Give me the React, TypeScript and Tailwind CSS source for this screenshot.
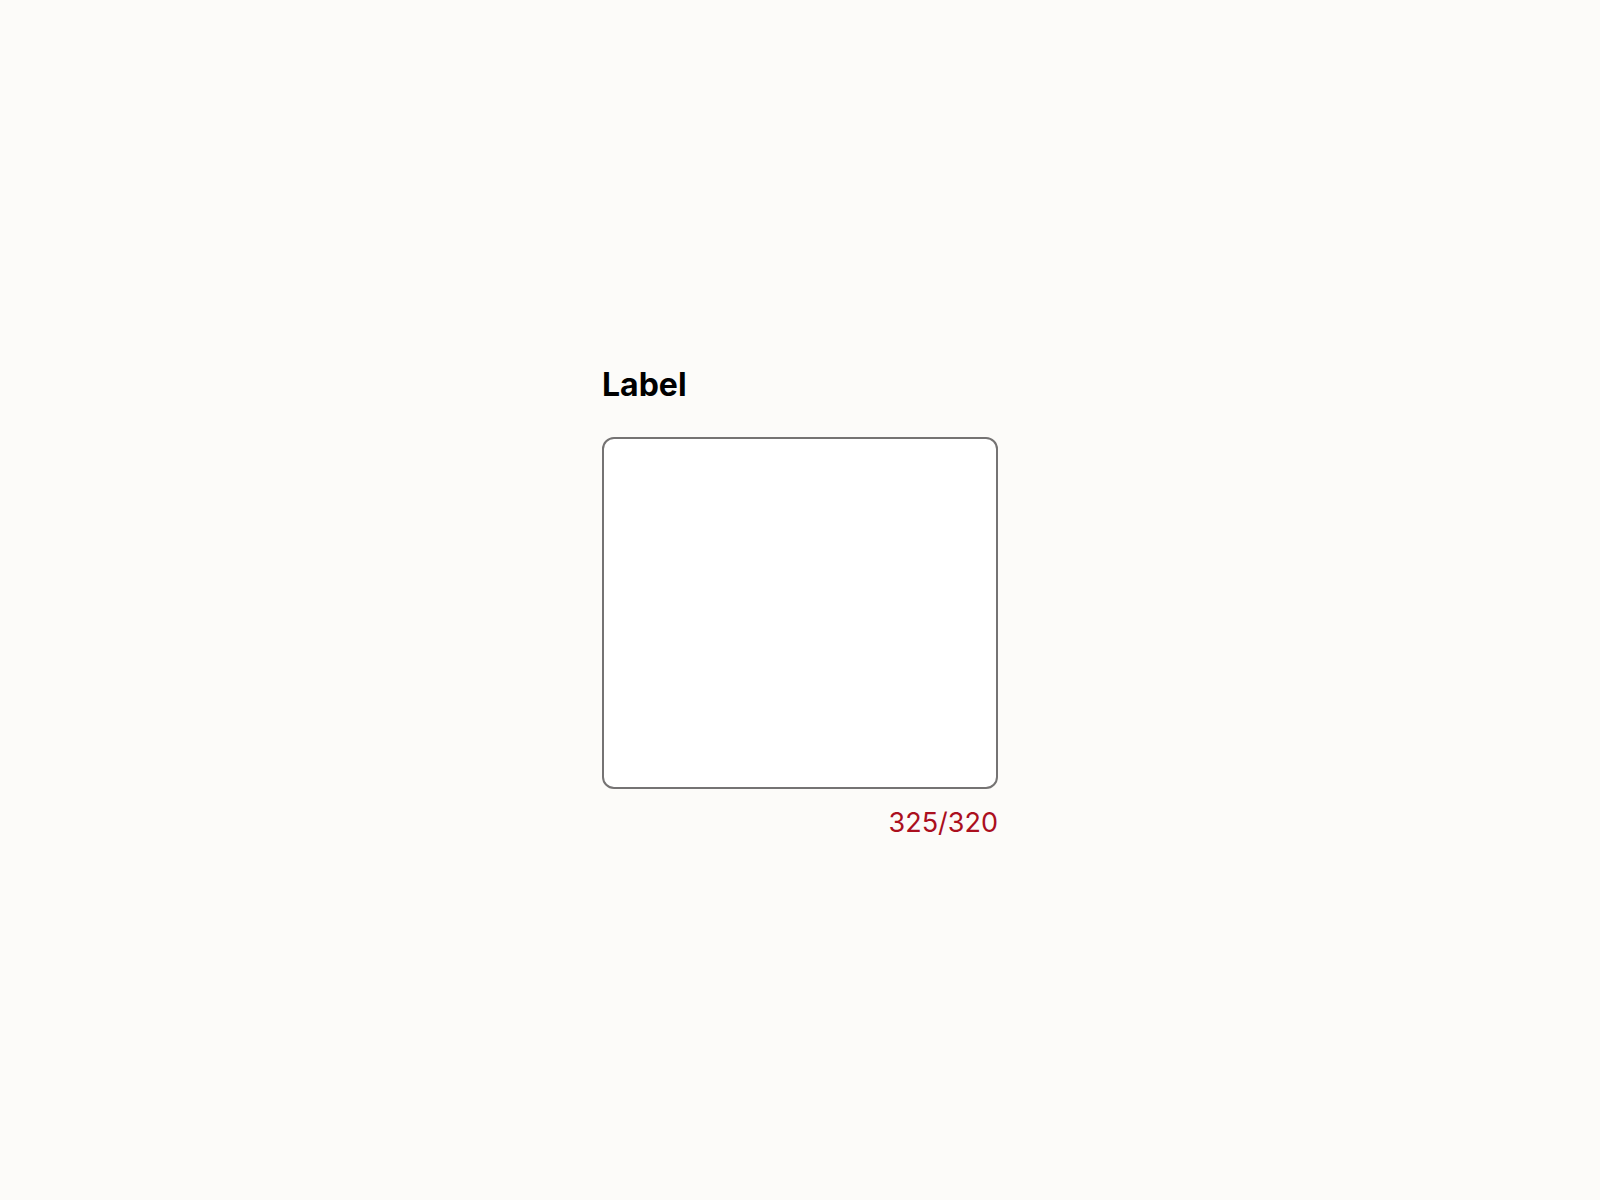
import { useId } from "react";

export default function App() {
  const id = useId();
  const countId = `${id}-count`;
  return (
    <main className="flex min-h-screen items-center justify-center bg-[#fcfbf9] p-6 font-['Inter',sans-serif]">
      <div className="flex w-full max-w-[396px] flex-col">
        <label htmlFor={id} className="mb-[30px] text-[32px] leading-11 font-bold text-black">
          Label
        </label>
        <textarea
          id={id}
          aria-describedby={countId}
          className="block h-[352px] w-full resize-none rounded-xl border-2 border-[#757373] bg-white p-4 text-[27px] leading-10 outline-none"
        />
        <p id={countId} className="mt-5 text-right text-[27px] leading-7 text-[#ab0f1e]">
          325/320
        </p>
      </div>
    </main>
  );
}
